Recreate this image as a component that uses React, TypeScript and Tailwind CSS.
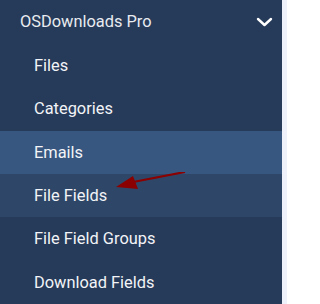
const items = [
	{ label: "Files", state: "" },
	{ label: "Categories", state: "" },
	{ label: "Emails", state: "hover" },
	{ label: "File Fields", state: "active" },
	{ label: "File Field Groups", state: "" },
	{ label: "Download Fields", state: "" },
];

const App = () => {
	return (
		<div className="flex h-[304px] w-[287px] bg-[#eef1f9] font-['Roboto',sans-serif]">
			<nav className="flex h-full w-[282px] flex-col bg-[#263a59]">
				<div className="flex h-[44px] items-center justify-between pl-[20px] pr-[9px] text-[16.4px] text-[#e8ebf0]">
					<span>OSDownloads Pro</span>
					<svg width="17" height="10" viewBox="0 0 17 10" fill="none">
						<polyline
							points="2,2 8.5,8 15,2"
							stroke="white"
							strokeWidth="2.4"
							strokeLinecap="round"
							strokeLinejoin="round"
						/>
					</svg>
				</div>
				{items.map((item) => (
					<div
						key={item.label}
						className={`relative flex h-[43.4px] items-center pl-[34px] pt-[1px] text-[16.4px] text-[#f2f4f7] ${
							item.state === "hover"
								? "bg-[#385780]"
								: item.state === "active"
									? "bg-[#2e4768]"
									: ""
						}`}
					>
						{item.label}
						{item.state === "active" && (
							<svg
								className="absolute left-0 top-[-2px]"
								width="200"
								height="30"
								viewBox="0 0 200 30"
							>
								<line x1="185" y1="0" x2="128" y2="11" stroke="#8b0000" strokeWidth="2.2" />
								<polygon points="116,15 133,4 138,17" fill="#8b0000" />
							</svg>
						)}
					</div>
				))}
			</nav>
		</div>
	);
};

export default App;
